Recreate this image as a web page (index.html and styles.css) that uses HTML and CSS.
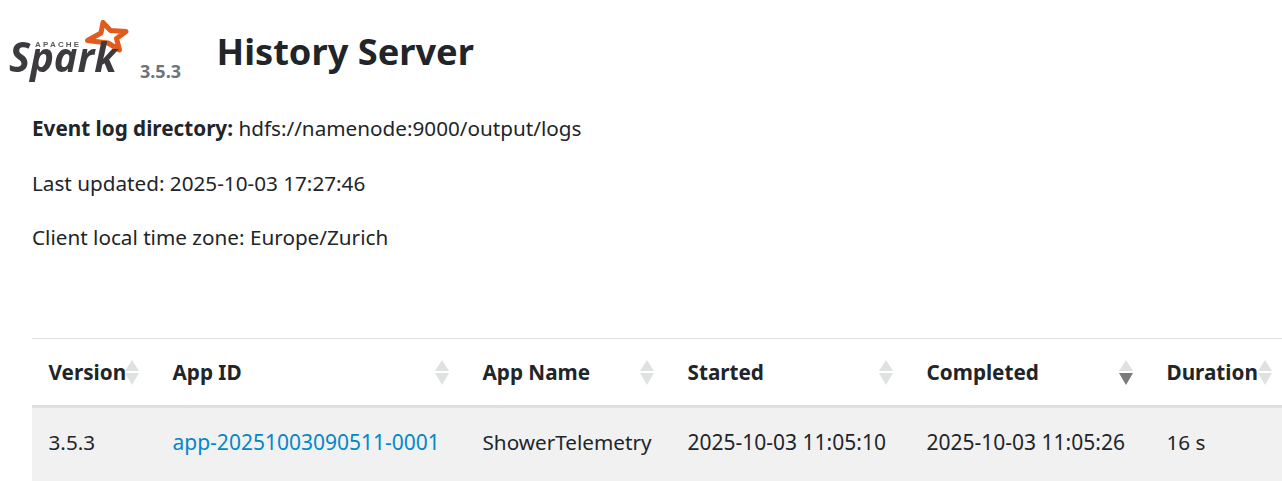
FILE: index.html
```html
<!DOCTYPE html>
<html lang="en">
<head>
    <meta charset="UTF-8">
    <title>History Server</title>
    <meta name="viewport" content="width=device-width, initial-scale=1.0">
    <link rel="stylesheet" href="styles.css">
</head>
<body>
    <header class="page-header">
        <div class="brand">
            <svg class="logo" viewBox="0 10 130 72" width="130" height="72" aria-label="Apache Spark">
                <path class="logo-star" d="M103 22.5 L110.5 30.5 L126 31.5 L116.5 38.5 L119.5 50 L108 43 L87.5 40.5 L101 33 Z"/>
                <text class="logo-apache" x="35" y="47">APACHE</text>
                <text class="logo-word" x="9" y="72" textLength="108" lengthAdjust="spacingAndGlyphs">Spark</text>
            </svg>
            <span class="version">3.5.3</span>
        </div>
        <h1>History Server</h1>
    </header>
    <ul class="info">
        <li><strong>Event log directory:</strong> hdfs://namenode:9000/output/logs</li>
        <li>Last updated: 2025-10-03 17:27:46</li>
        <li>Client local time zone: Europe/Zurich</li>
    </ul>
    <table class="history">
        <thead>
            <tr>
                <th class="c-version">Version</th>
                <th class="c-id">App ID</th>
                <th class="c-name">App Name</th>
                <th class="c-started">Started</th>
                <th class="c-completed sorted">Completed</th>
                <th class="c-duration">Duration</th>
            </tr>
        </thead>
        <tbody>
            <tr>
                <td>3.5.3</td>
                <td class="num"><a href="#">app-20251003090511-0001</a></td>
                <td>ShowerTelemetry</td>
                <td class="num">2025-10-03 11:05:10</td>
                <td class="num">2025-10-03 11:05:26</td>
                <td>16 s</td>
            </tr>
        </tbody>
    </table>
</body>
</html>
```
FILE: styles.css
```css
html, body { overflow: hidden; }
body { margin: 0; font-family: "Noto Sans", Arial, sans-serif; font-size: 20.7px; line-height: 30px; color: #212529; background: #fff; }
.page-header { display: flex; align-items: flex-start; height: 103px; padding-top: 10px; box-sizing: border-box; }
.brand { display: flex; align-items: flex-end; width: 216.5px; }
.logo { display: block; flex: none; filter: blur(0.5px); }
.logo-star { fill: none; stroke: #e25a1c; stroke-width: 5; stroke-linejoin: round; }
.logo-apache { font: bold 8px "Liberation Sans", Arial, sans-serif; letter-spacing: 2.2px; fill: #5a5a5a; }
.logo-word { font: italic 700 41px "Open Sans", Arial, sans-serif; fill: #3c3a3e; }
.version { font-size: 18px; font-weight: 700; color: #6c757d; margin: 0 0 -1px 10px; line-height: 24px; }
h1 { margin: 19px 0 0; font-size: 36.2px; font-weight: 700; line-height: 44px; }
.info { list-style: none; margin: 10px 0 0; padding: 0 0 0 32px; display: flex; flex-direction: column; gap: 24.5px; }
.history { border-collapse: collapse; table-layout: fixed; width: 1257px; margin: 86px 0 0 32px; }
.history th, .history td { box-sizing: border-box; padding: 18px 16.5px; text-align: left; white-space: nowrap; }
.history thead tr { border-top: 1px solid #dee2e6; border-bottom: 3px solid #dee0e6; }
.history th { position: relative; font-weight: 700; }
.history tbody tr { background: #f1f1f2; }
.history td { padding: 19px 16.5px 26px; }
.history td.num { font-size: 21px; }
.history a { color: #0088cc; text-decoration: none; }
.c-version { width: 124px; }
.c-id { width: 310px; }
.c-name { width: 205px; }
.c-started { width: 239px; }
.c-completed { width: 240px; }
.c-duration { width: 139px; }
.history th::before, .history th::after { content: ""; position: absolute; right: 17px; width: 0; height: 0; border-left: 7px solid transparent; border-right: 7px solid transparent; }
.history th::before { top: 21px; border-bottom: 11px solid #e0e2e2; }
.history th::after { top: 34px; border-top: 12px solid #e0e2e2; }
.history th.sorted::after { border-top-color: #7a7a7c; }
```
